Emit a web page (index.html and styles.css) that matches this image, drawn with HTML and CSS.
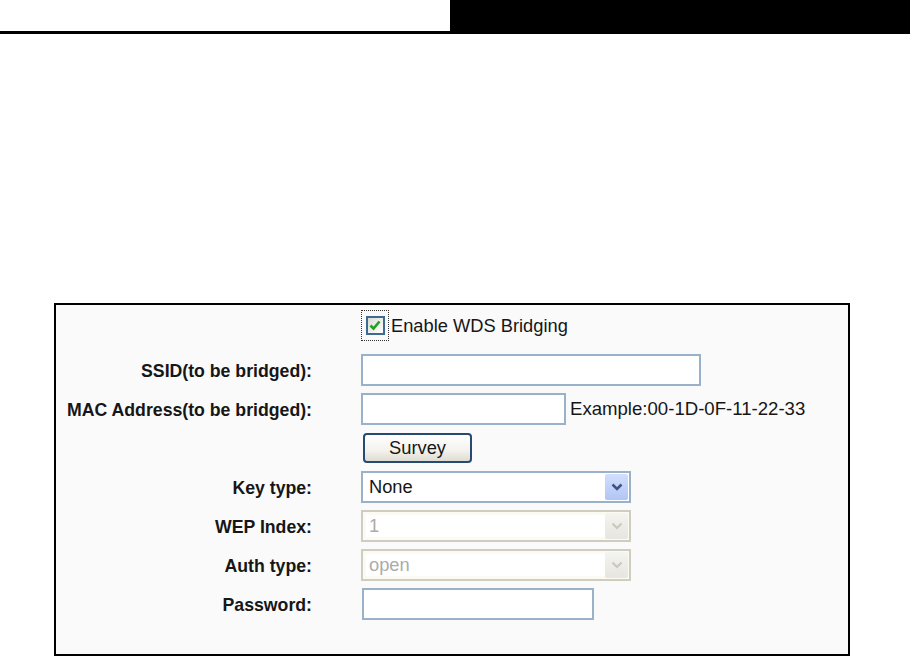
FILE: index.html
```html
<!DOCTYPE html>
<html lang="en">
<head>
  <meta charset="UTF-8">
  <title>Wireless Settings - WDS</title>
  <link rel="stylesheet" href="styles.css">
</head>
<body>
  <div class="header">
    <div class="header-left"></div>
    <div class="header-right"></div>
  </div>

  <div class="panel">
    <form class="wds-form">
      <span></span>
      <label class="check-row">
        <span class="focus-ring">
          <span class="checkbox">
            <svg width="12" height="11" viewBox="0 0 12 11"><path d="M1.5 5.5 L4.5 8.5 L10.5 1.5" fill="none" stroke="#21a121" stroke-width="2.6"/></svg>
          </span>
        </span>
        Enable WDS Bridging
      </label>

      <span class="label">SSID(to be bridged):</span>
      <div class="field"><input class="text wide" type="text"></div>

      <span class="label">MAC Address(to be bridged):</span>
      <div class="field">
        <input class="text mac" type="text">
        <span class="hint">Example:00-1D-0F-11-22-33</span>
      </div>

      <span></span>
      <div class="field"><button type="button" class="survey">Survey</button></div>

      <span class="label">Key type:</span>
      <div class="field">
        <div class="select">
          <span class="value">None</span>
          <span class="arrow"><svg width="12" height="8" viewBox="0 0 12 8"><path d="M1.5 1.5 L6 6 L10.5 1.5" fill="none" stroke="#3f5480" stroke-width="2.6"/></svg></span>
        </div>
      </div>

      <span class="label">WEP Index:</span>
      <div class="field">
        <div class="select disabled">
          <span class="value">1</span>
          <span class="arrow"><svg width="12" height="8" viewBox="0 0 12 8"><path d="M1.5 1.5 L6 6 L10.5 1.5" fill="none" stroke="#c9c9c0" stroke-width="2.2"/></svg></span>
        </div>
      </div>

      <span class="label">Auth type:</span>
      <div class="field">
        <div class="select disabled">
          <span class="value">open</span>
          <span class="arrow"><svg width="12" height="8" viewBox="0 0 12 8"><path d="M1.5 1.5 L6 6 L10.5 1.5" fill="none" stroke="#c9c9c0" stroke-width="2.2"/></svg></span>
        </div>
      </div>

      <span class="label">Password:</span>
      <div class="field"><input class="text pass" type="password"></div>
    </form>
  </div>
</body>
</html>
```

FILE: styles.css
```css
body {
  margin: 0;
  background: white;
  font-family: "Liberation Sans", Arial, sans-serif;
  font-size: 18.3px;
  color: #161616;
}

.header {
  display: flex;
  height: 34px;
}

.header-left {
  width: 450px;
  border-bottom: 3px solid black;
  box-sizing: border-box;
}

.header-right {
  flex: 1;
  background: black;
}

.panel {
  margin: 269px 0 0 54px;
  width: 796px;
  height: 353px;
  box-sizing: border-box;
  border: 2px solid black;
  background: #fafafa;
}

.wds-form {
  display: grid;
  grid-template-columns: 256px 1fr;
  grid-template-rows: 37px;
  grid-auto-rows: 32px;
  column-gap: 49px;
  row-gap: 7px;
  padding-top: 5px;
}

.label {
  font-weight: bold;
  font-size: 17.7px;
  text-align: right;
  align-self: center;
  padding-top: 2px;
}

.check-row {
  display: flex;
  align-items: flex-start;
  line-height: 32px;
}

.focus-ring {
  display: flex;
  align-items: center;
  justify-content: center;
  width: 26px;
  height: 29px;
  border: 1px dotted #333;
  margin-right: 2px;
}

.checkbox {
  display: flex;
  align-items: center;
  justify-content: center;
  width: 15px;
  height: 15px;
  border: 2px solid #3f6a93;
  background: linear-gradient(135deg, #dcdcd6, #ffffff);
}

.field {
  display: flex;
  align-items: center;
}

.text {
  height: 32px;
  box-sizing: border-box;
  border: 2px solid #9ab1ca;
  background: white;
  margin: 0;
  padding: 0 6px;
  font: inherit;
}

.wide {
  width: 340px;
}

.mac {
  width: 205px;
}

.pass {
  width: 232px;
  margin-left: 1px;
}

.hint {
  margin-left: 4px;
  font-size: 18.6px;
}

.survey {
  width: 109px;
  height: 30px;
  margin-left: 2px;
  border: 2px solid #264a72;
  border-radius: 4px;
  background: linear-gradient(#ffffff, #f3f2ec 60%, #dedcd2);
  font: inherit;
  color: #161616;
  padding: 0;
}

.select {
  display: flex;
  align-items: center;
  justify-content: space-between;
  width: 270px;
  height: 32px;
  box-sizing: border-box;
  border: 2px solid #9ab1ca;
  background: white;
  padding: 0 1px 0 6px;
}

.arrow {
  display: flex;
  align-items: center;
  justify-content: center;
  width: 23px;
  height: 26px;
  border-radius: 2px;
  background: linear-gradient(#d2defc, #b1c5f5);
}

.select.disabled {
  border-color: #cfcdbf;
  color: #ababab;
  box-shadow: inset 0 0 0 3px #fbfaf3;
}

.select.disabled .arrow {
  background: linear-gradient(#f4f4f0, #e6e5df);
}
```
